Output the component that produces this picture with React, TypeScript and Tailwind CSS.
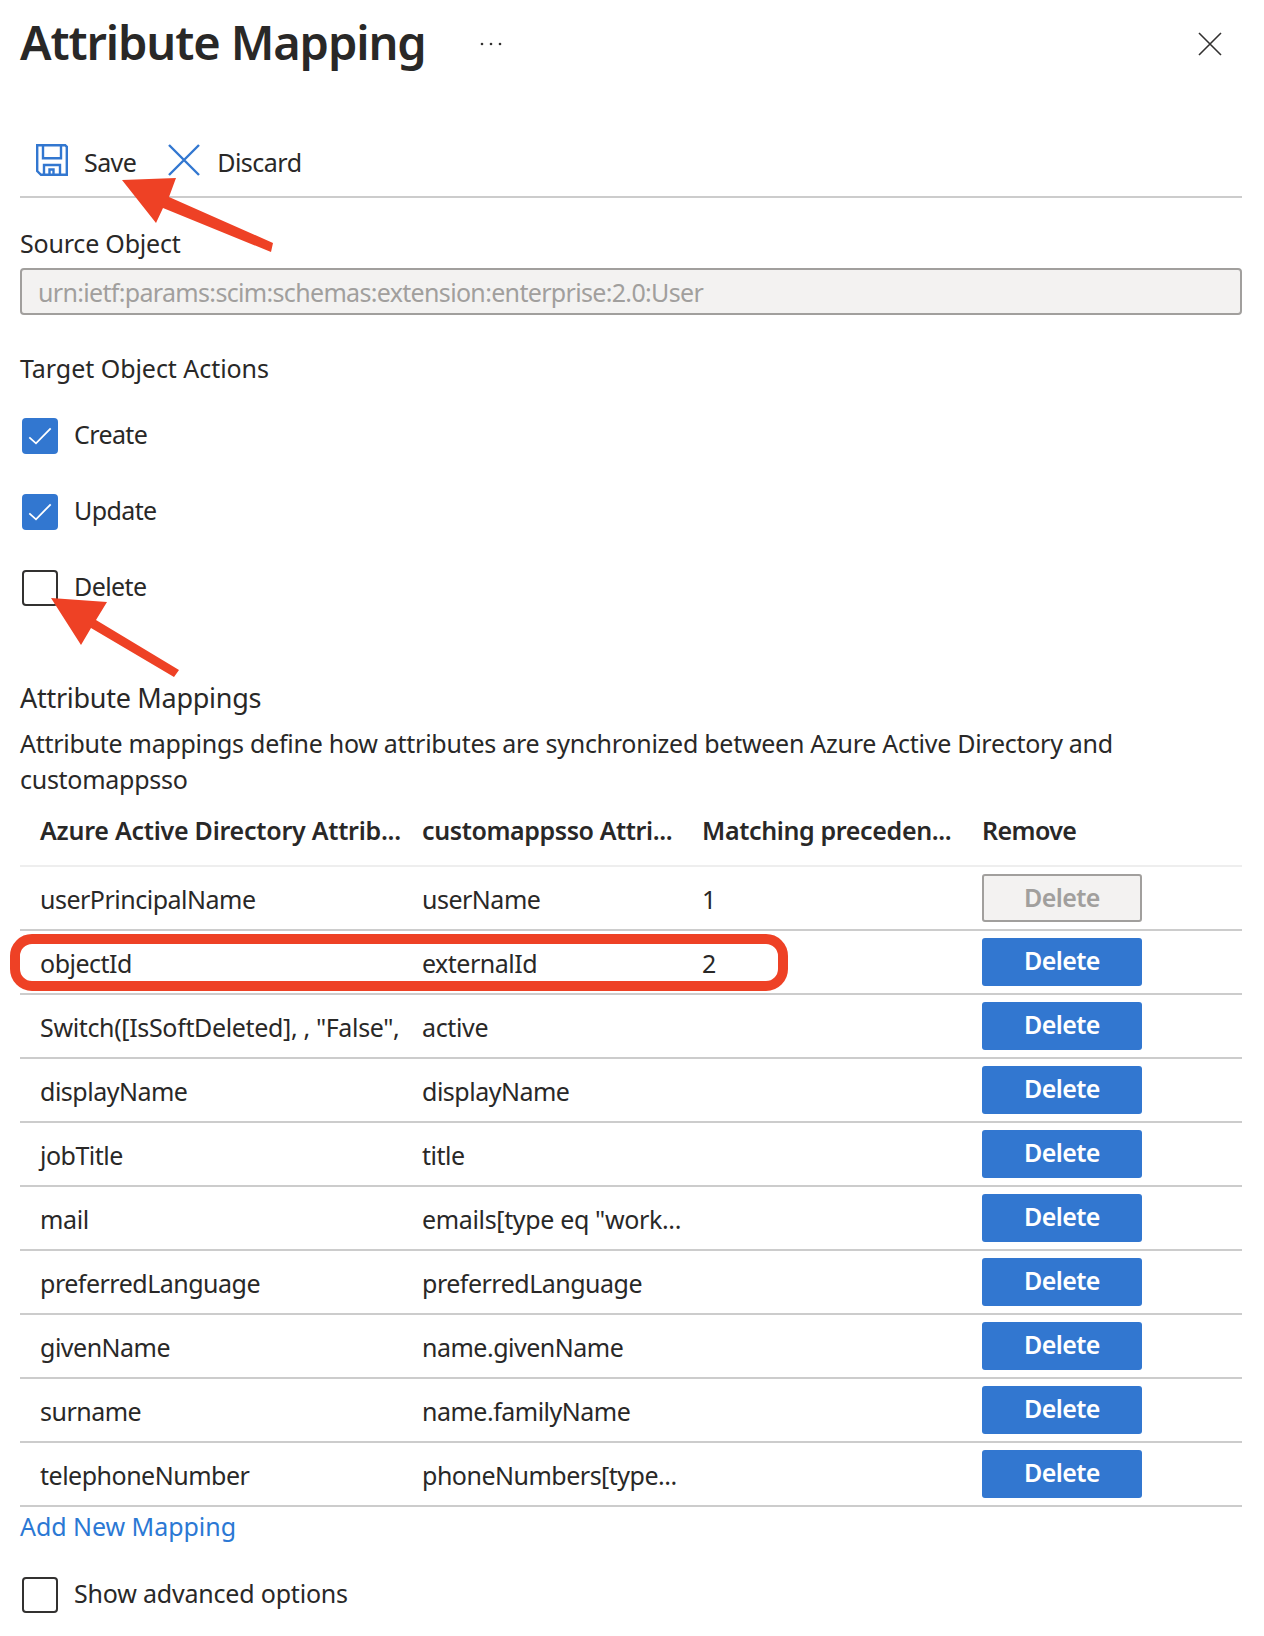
import React from 'react';

const font = "font-['Noto_Sans',sans-serif]";

const rows = [
  { source: 'userPrincipalName', target: 'userName', precedence: '1', disabled: true },
  { source: 'objectId', target: 'externalId', precedence: '2' },
  { source: 'Switch([IsSoftDeleted], , "False",', target: 'active', wide: true },
  { source: 'displayName', target: 'displayName' },
  { source: 'jobTitle', target: 'title' },
  { source: 'mail', target: 'emails[type eq "work...', wide: true },
  { source: 'preferredLanguage', target: 'preferredLanguage' },
  { source: 'givenName', target: 'name.givenName' },
  { source: 'surname', target: 'name.familyName' },
  { source: 'telephoneNumber', target: 'phoneNumbers[type...' },
];

const SaveIcon = () => (
  <svg width="32" height="32" viewBox="0 0 32 32" fill="none" stroke="#3277d0" strokeWidth="2.4">
    <path d="M1.2 1.2h28l1.6 1.6v28H5l-3.8-3.8z" />
    <path d="M7 1.2v13h18v-13" />
    <path d="M8 30.8V21h16v9.8" />
    <path d="M13.500 30.800v-5.300h4v5.300" />
  </svg>
);

const Box = ({ checked, label, className }: { checked?: boolean; label: string; className?: string }) => (
  <div className="flex h-[36px] items-center">
    {checked ? (
      <div className="ml-[2px] h-[36px] w-[36px] rounded-[4px] bg-[#3277d0]">
        <svg width="36" height="36" viewBox="0 0 36 36" fill="none" stroke="white" strokeWidth="1.8">
          <path d="M7.300 19.300L14 25.300L28.700 10.300" />
        </svg>
      </div>
    ) : (
      <div className="ml-[2px] h-[36px] w-[36px] rounded-[4px] border-2 border-[#323130]" />
    )}
    <span className={`mb-[4px] ml-[16px] ${className ?? ''}`}>{label}</span>
  </div>
);

export default function App() {
  return (
    <div className={`relative h-[1636px] w-[1264px] overflow-hidden bg-white pl-[20px] text-[25px] leading-[34px] tracking-[-0.6px] text-[#292827] ${font}`}>
      <div className="w-[1222px]">
        {/* Header */}
        <div className="flex h-[88px] items-center">
          <h1 className="mb-[4px] w-[460px] text-[47px] leading-[64px] font-semibold tracking-[-1.1px]">Attribute Mapping</h1>
          <svg width="22" height="4" viewBox="0 0 22 4" fill="#323130">
            <circle cx="2" cy="2" r="1.3" />
            <circle cx="11" cy="2" r="1.3" />
            <circle cx="20" cy="2" r="1.3" />
          </svg>
          <svg className="ml-auto mr-[20px]" width="24" height="24" viewBox="0 0 24 24" stroke="#323130" strokeWidth="1.6">
            <path d="M1 1l22 22M23 1L1 23" />
          </svg>
        </div>

        {/* Toolbar */}
        <div className="flex h-[110px] items-end border-b-2 border-[#cccccc] pb-[20px]">
          <div className="ml-[16px] flex h-[32px] items-center">
            <SaveIcon />
            <span className="ml-[16px] mt-[3px]">Save</span>
          </div>
          <div className="ml-[32px] flex h-[32px] items-center">
            <svg width="32" height="32" viewBox="0 0 32 32" stroke="#3277d0" strokeWidth="2.4">
              <path d="M1 1l30 30M31 1L1 31" />
            </svg>
            <span className="ml-[17px] mt-[3px] tracking-[-0.5px]">Discard</span>
          </div>
        </div>

        {/* Source object */}
        <div className="mt-[28px] tracking-[-0.2px]">Source Object</div>
        <div className="mt-[8px] flex h-[47px] items-center rounded-[4px] border-2 border-[#a19f9d] bg-[#f3f2f1] pl-[16px] tracking-[-0.67px] text-[#a19f9d]">
          urn:ietf:params:scim:schemas:extension:enterprise:2.0:User
        </div>

        {/* Target object actions */}
        <div className="mt-[36px] tracking-[-0.05px]">Target Object Actions</div>
        <div className="mt-[33px] flex flex-col gap-[40px]">
          <Box checked label="Create" />
          <Box checked label="Update" />
          <Box label="Delete" />
        </div>

        {/* Mappings */}
        <div className="mt-[75px] text-[27px] tracking-[-0.28px]">Attribute Mappings</div>
        <p className="mt-[10px] leading-[36px] tracking-[-0.27px]">
          Attribute mappings define how attributes are synchronized between Azure Active Directory and customappsso
        </p>
        <div className="flex h-[70px] items-center border-b-2 border-[#eeeeee] pb-[2px] font-semibold">
          <div className="w-[402px] pl-[20px] tracking-[-0.24px]">Azure Active Directory Attrib...</div>
          <div className="w-[280px] tracking-[-0.4px]">customappsso Attri...</div>
          <div className="w-[280px] tracking-[-0.35px]">Matching preceden...</div>
          <div>Remove</div>
        </div>
        {rows.map((row) => (
          <div key={row.source} className={`flex h-[64px] border-b-2 border-[#cccccc] ${row.wide ? 'tracking-[-0.35px]' : 'tracking-[-0.5px]'}`}>
            <div className="flex w-[402px] items-center overflow-hidden pl-[20px] pt-[2px] whitespace-nowrap">{row.source}</div>
            <div className="flex w-[280px] items-center pt-[2px]">{row.target}</div>
            <div className="flex w-[280px] items-center pt-[2px]">{row.precedence}</div>
            <div className="pt-[7px]">
              <button
                className={
                  row.disabled
                    ? 'h-[48px] w-[160px] rounded-[3px] border-2 border-[#a19f9d] bg-[#f3f2f1] pb-[3px] font-semibold tracking-[-0.6px] text-[#a19f9d]'
                    : 'h-[48px] w-[160px] rounded-[3px] bg-[#3277d0] pb-[5px] font-semibold tracking-[-0.6px] text-white'
                }
              >
                Delete
              </button>
            </div>
          </div>
        ))}
        <div className="mt-[2px] tracking-[-0.05px] text-[#2b78d4]">Add New Mapping</div>
        <div className="mt-[34px]">
          <Box label="Show advanced options" className="tracking-[-0.2px]" />
        </div>
      </div>

      {/* Annotations */}
      <div className="absolute left-[10px] top-[934px] h-[57px] w-[778px] rounded-[22px] border-[10px] border-[#ee4125]" />
      <svg className="absolute left-0 top-0" width="300" height="700" fill="#ee4125">
        <polygon points="122,180 176,178 169,197 273,243 271,252 163,208 156,223" />
        <polygon points="51,598 107,602 96,620 179,670 174,677 91,628 81,645" />
      </svg>
    </div>
  );
}
